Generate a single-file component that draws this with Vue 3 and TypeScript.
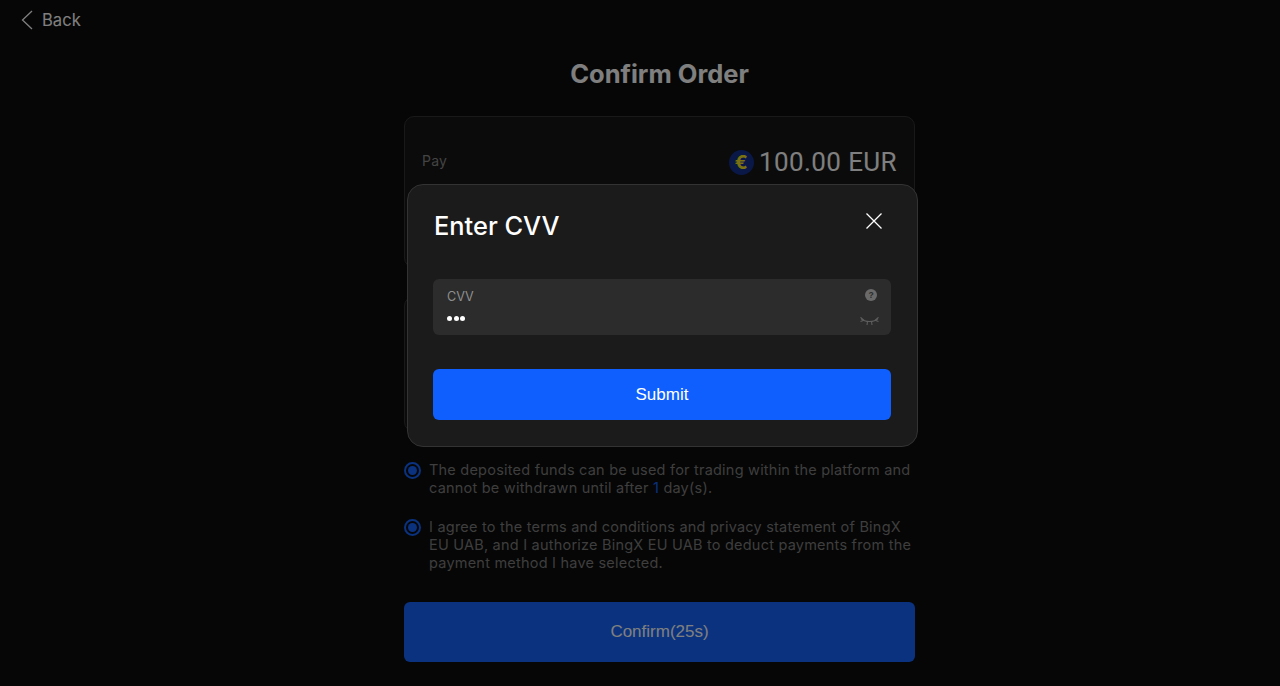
<script setup lang="ts">
const notices = [
  { id: 1, before: 'The deposited funds can be used for trading within the platform and cannot be withdrawn until after ', num: '1', after: ' day(s).' },
  { id: 2, before: 'I agree to the terms and conditions and privacy statement of BingX EU UAB, and I authorize BingX EU UAB to deduct payments from the payment method I have selected.', num: '', after: '' },
]
</script>

<template>
  <div class="page">
    <header class="back">
      <svg width="14" height="20" viewBox="0 0 14 20" fill="none"><path d="M12 1 L2.5 10 L12 19" stroke="#fff" stroke-width="1.3"/></svg>
      <span>Back</span>
    </header>
    <main class="col">
      <h1>Confirm Order</h1>
      <section class="card card-pay">
        <span class="pay">Pay</span>
        <div class="amount">
          <svg class="euro" width="25" height="25" viewBox="0 0 25 25">
            <circle cx="12.5" cy="12.5" r="12.5" fill="#12308f"/>
            <text x="12.5" y="19" text-anchor="middle" font-size="19" font-weight="700" font-family="Inter" fill="#f5e51f">€</text>
          </svg>
          <span>100.00 EUR</span>
        </div>
      </section>
      <section class="card card-second"></section>
      <div class="notices">
        <div v-for="n in notices" :key="n.id" class="notice">
          <span class="radio"><i></i></span>
          <p>{{ n.before }}<b v-if="n.num">{{ n.num }}</b>{{ n.after }}</p>
        </div>
      </div>
      <button class="confirm">Confirm(25s)</button>
    </main>

    <div class="overlay">
      <div class="modal">
        <div class="modal-head">
          <h2>Enter CVV</h2>
          <svg class="close" width="18" height="18" viewBox="0 0 18 18" fill="none"><path d="M1.5 1.5 L16.5 16.5 M16.5 1.5 L1.5 16.5" stroke="#fff" stroke-width="1.3"/></svg>
        </div>
        <div class="field">
          <div class="field-row">
            <span class="label">CVV</span>
            <svg width="12" height="12" viewBox="0 0 12 12"><circle cx="6" cy="6" r="6" fill="#6a6a6a"/><text x="6" y="9" text-anchor="middle" font-size="8.5" font-weight="700" font-family="Liberation Sans" fill="#2c2c2c">?</text></svg>
          </div>
          <div class="field-row value-row">
            <span class="dots"><i></i><i></i><i></i></span>
            <svg width="19" height="9" viewBox="0 0 19 9" fill="none" stroke="#5e5e5e" stroke-width="1.1"><path d="M1 1.5 C5 5.5 14 5.5 18 1.5"/><path d="M.5 .3 L4 3.3 M18.5 .3 L15 3.3 M.5 4.5 L4 3.3 M18.5 4.5 L15 3.3 M7.5 4.5 L7 8 M11.5 4.5 L12 8"/></svg>
          </div>
        </div>
        <button class="submit">Submit</button>
      </div>
    </div>
  </div>
</template>

<style>
html, body { margin: 0; background: #0c0c0c; }
</style>

<style scoped>
.page {
  position: relative;
  height: 686px;
  overflow: hidden;
  background: #0c0c0c;
  font-family: Inter, "Liberation Sans", sans-serif;
  color: #fff;
}
.back {
  display: flex;
  align-items: center;
  gap: 8px;
  height: 40px;
  padding-left: 20px;
  font-size: 16.6px;
}
.col {
  width: 511px;
  margin-left: 404px;
  display: flex;
  flex-direction: column;
}
h1 {
  margin: 17px 0 0;
  font-size: 25.5px;
  line-height: 34px;
  font-weight: 700;
  text-align: center;
}
.card {
  box-sizing: border-box;
  background: #161616;
  border: 1px solid #333;
  border-radius: 10px;
}
.card-pay {
  margin-top: 25px;
  height: 152px;
  padding: 17px 17px 0;
  display: flex;
  justify-content: space-between;
  align-items: flex-start;
}
.pay {
  margin-top: 17px;
  font-size: 14px;
  line-height: 20px;
  color: #888;
  letter-spacing: .2px;
}
.amount {
  display: flex;
  align-items: center;
  gap: 5px;
  margin-top: 11px;
  font-family: Roboto, sans-serif;
  font-size: 26px;
  font-weight: 400;
  line-height: 34px;
  letter-spacing: .4px;
}
.euro {
  flex: none;
}
.card-second {
  margin-top: 28px;
  height: 136px;
}
.notices {
  margin-top: 29px;
  display: flex;
  flex-direction: column;
  gap: 21px;
}
.notice {
  display: flex;
  gap: 8px;
}
.radio {
  flex: none;
  box-sizing: border-box;
  width: 17px;
  height: 17px;
  margin-top: 1px;
  border: 2px solid #1464ff;
  border-radius: 50%;
  display: flex;
  align-items: center;
  justify-content: center;
}
.radio i {
  width: 9px;
  height: 9px;
  border-radius: 50%;
  background: #1464ff;
}
.notice p {
  margin: 0;
  font-size: 14.5px;
  line-height: 18px;
  letter-spacing: .22px;
  color: #7c7c7c;
}
.notice b {
  font-weight: 400;
  color: #1464ff;
}
.confirm {
  margin-top: 30px;
  height: 60px;
  border: 0;
  border-radius: 6px;
  background: #1464ff;
  color: #fff;
  font-family: "Liberation Sans", sans-serif;
  font-size: 17px;
}
.overlay {
  position: absolute;
  inset: 0;
  background: rgba(0, 0, 0, .5);
}
.modal {
  position: absolute;
  left: 407px;
  top: 184px;
  box-sizing: border-box;
  width: 511px;
  height: 263px;
  padding: 0 26px 0 25px;
  background: #1b1b1b;
  border: 1px solid #333;
  border-radius: 16px;
}
.modal-head {
  display: flex;
  justify-content: space-between;
  align-items: flex-start;
  height: 94px;
}
h2 {
  margin: 23px 0 0 1px;
  font-size: 25.4px;
  line-height: 36px;
  font-weight: 500;
}
.close {
  margin-top: 27px;
  margin-right: 8px;
}
.field {
  box-sizing: border-box;
  height: 56px;
  padding: 9px 14px 0;
  background: #2c2c2c;
  border-radius: 6px;
}
.field-row {
  display: flex;
  justify-content: space-between;
  align-items: center;
  height: 16px;
}
.field-row > svg {
  margin-top: -2px;
}
.label {
  font-size: 12.6px;
  color: #8f8f8f;
}
.value-row {
  margin-top: 6px;
}
.dots {
  display: flex;
  gap: 1.5px;
}
.dots i {
  width: 5px;
  height: 5px;
  border-radius: 50%;
  background: #fff;
}
.value-row > svg {
  margin-right: -2px;
  margin-top: 6px;
}
.submit {
  display: block;
  width: 100%;
  height: 51px;
  margin-top: 34px;
  border: 0;
  border-radius: 6px;
  background: #0f5fff;
  color: #fff;
  font-family: "Liberation Sans", sans-serif;
  font-size: 17px;
}
</style>
